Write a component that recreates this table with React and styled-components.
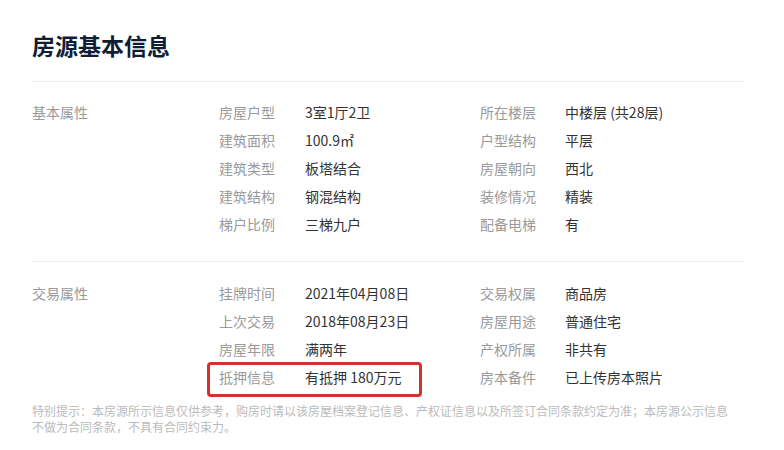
import styled, { createGlobalStyle } from 'styled-components'

const Global = createGlobalStyle`
  body {
    margin: 0;
    background: #fff;
    font-family: "Noto Sans CJK SC", "Noto Sans", sans-serif;
  }
`;

const Wrap = styled.div`
  width: 711px;
  padding: 30px 0 0 32px;
`;
const Title = styled.h2`
  margin: 0 0 21px;
  font-size: 23px;
  line-height: 30px;
  font-weight: 700;
  color: #101d37;
`;
const Section = styled.div`
  display: flex;
  border-top: 1px solid #eeeeee;
  padding: ${p => p.top}px 0 ${p => p.bottom}px;
`;
const SectionName = styled.div`
  width: 187px;
  font-size: 14px;
  line-height: 28px;
  color: #999;
`;
const Rows = styled.div`
  display: flex;
  flex-direction: column;
`;
const Row = styled.div`
  display: flex;
  height: 28px;
  align-items: center;
`;
const Pair = styled.div`
  position: relative;
  display: flex;
  width: ${p => p.w}px;
  font-size: 14px;
  line-height: 28px;
`;
const Label = styled.span`
  width: ${p => p.w}px;
  color: #9a9a9a;
`;
const Value = styled.span`
  color: #333;
`;
const Mark = styled.div`
  position: absolute;
  left: -12px;
  top: -1px;
  width: 215px;
  height: 35px;
  box-sizing: border-box;
  border: 3px solid #d8302a;
  border-radius: 4px;
`;
const Note = styled.p`
  width: 705px;
  margin: 12px 0 0;
  font-size: 12px;
  line-height: 16px;
  color: #bbb;
`;

const basic = [
  ['房屋户型', '3室1厅2卫', '所在楼层', '中楼层 (共28层)'],
  ['建筑面积', '100.9㎡', '户型结构', '平层'],
  ['建筑类型', '板塔结合', '房屋朝向', '西北'],
  ['建筑结构', '钢混结构', '装修情况', '精装'],
  ['梯户比例', '三梯九户', '配备电梯', '有'],
];
const trade = [
  ['挂牌时间', '2021年04月08日', '交易权属', '商品房'],
  ['上次交易', '2018年08月23日', '房屋用途', '普通住宅'],
  ['房屋年限', '满两年', '产权所属', '非共有'],
  ['抵押信息', '有抵押 180万元', '房本备件', '已上传房本照片', true],
];

const Table = ({ rows }) => (
  <Rows>
    {rows.map(([a, b, c, d, hi]) => (
      <Row key={a}>
        <Pair w={261}>
          {hi && <Mark />}
          <Label w={86}>{a}</Label>
          <Value>{b}</Value>
        </Pair>
        <Pair w={263}>
          <Label w={85}>{c}</Label>
          <Value>{d}</Value>
        </Pair>
      </Row>
    ))}
  </Rows>
);

export default function App() {
  return (
    <>
      <Global />
      <Wrap>
        <Title>房源基本信息</Title>
        <Section top={16} bottom={23}>
          <SectionName>基本属性</SectionName>
          <Table rows={basic} />
        </Section>
        <Section top={17} bottom={0}>
          <SectionName>交易属性</SectionName>
          <Table rows={trade} />
        </Section>
        <Note>
          特别提示：本房源所示信息仅供参考，购房时请以该房屋档案登记信息、产权证信息以及所签订合同条款约定为准；本房源公示信息不做为合同条款，不具有合同约束力。
        </Note>
      </Wrap>
    </>
  )
}
